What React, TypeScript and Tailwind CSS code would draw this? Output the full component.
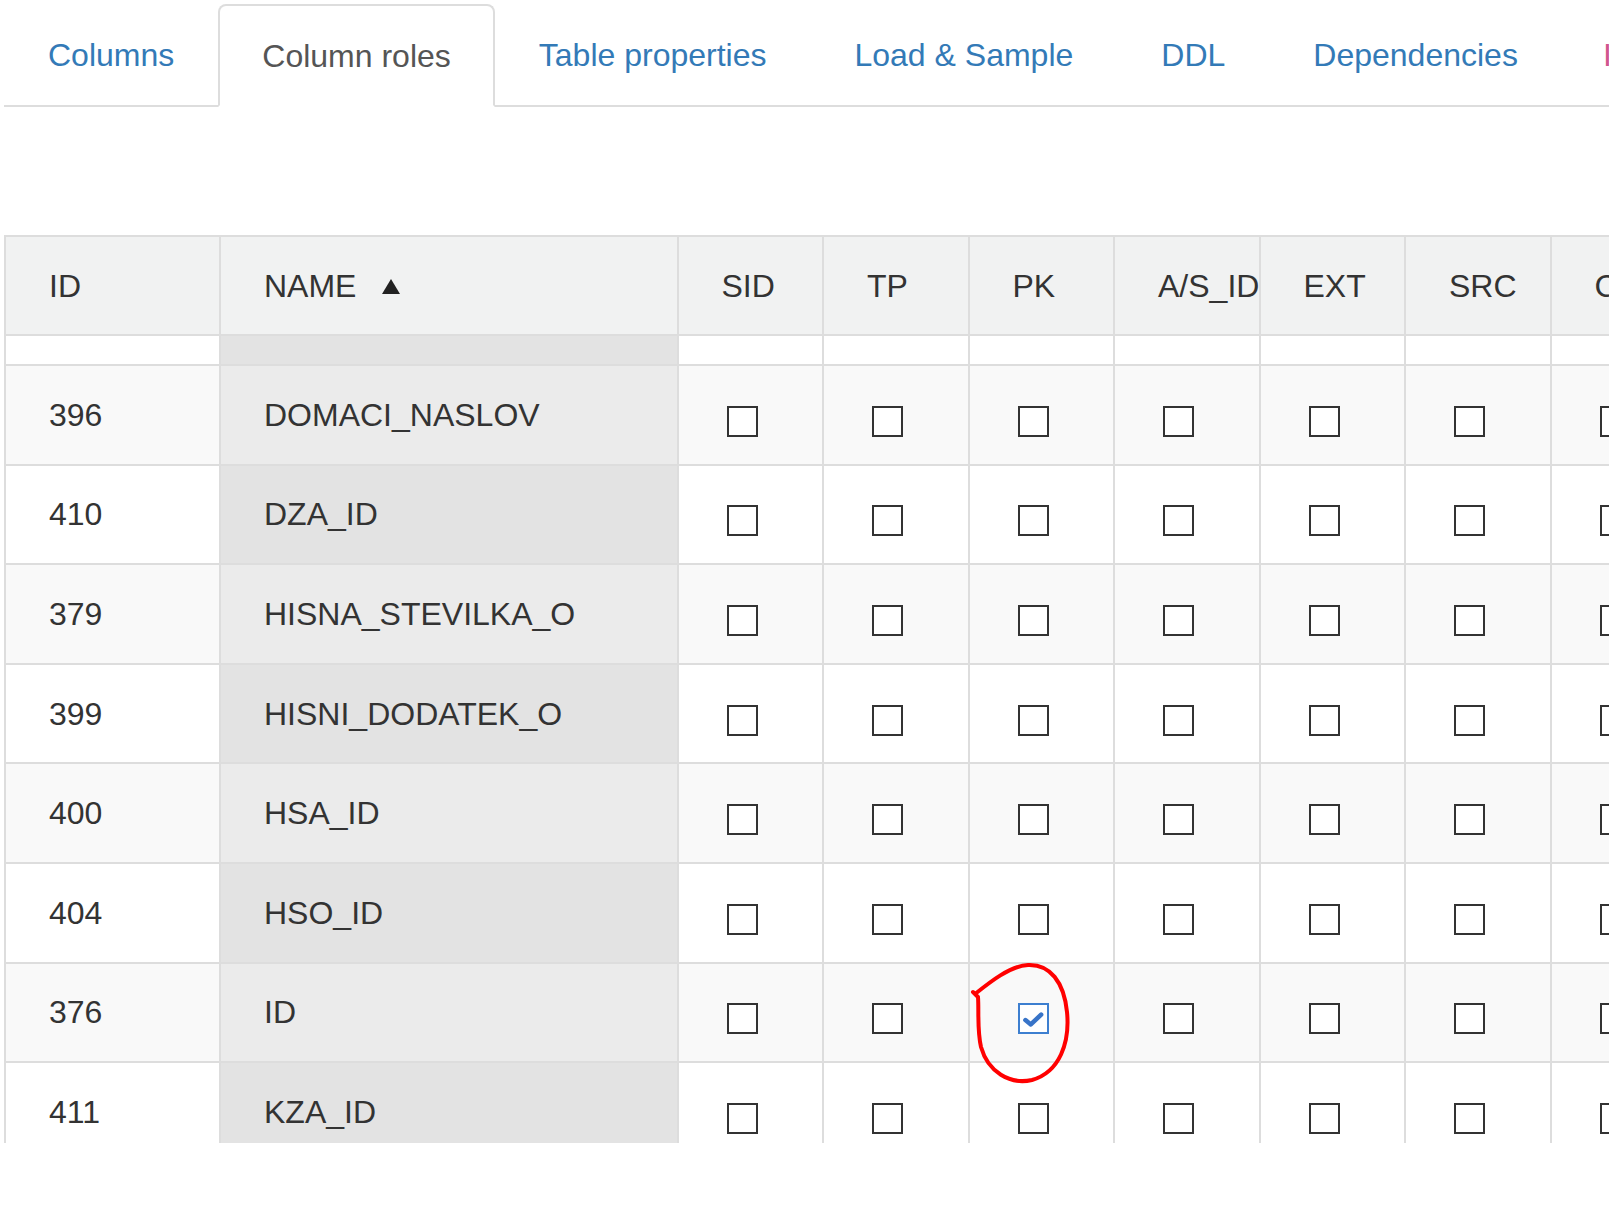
const tabs = [
  { label: 'Columns' },
  { label: 'Column roles', active: true },
  { label: 'Table properties' },
  { label: 'Load & Sample' },
  { label: 'DDL' },
  { label: 'Dependencies' },
  { label: 'Issues', danger: true },
]

const roleCols = ['SID', 'TP', 'PK', 'A/S_ID', 'EXT', 'SRC', 'CDC']

const rows = [
  { id: 396, name: 'DOMACI_NASLOV' },
  { id: 410, name: 'DZA_ID' },
  { id: 379, name: 'HISNA_STEVILKA_O' },
  { id: 399, name: 'HISNI_DODATEK_O' },
  { id: 400, name: 'HSA_ID' },
  { id: 404, name: 'HSO_ID' },
  { id: 376, name: 'ID', checked: 'PK' },
  { id: 411, name: 'KZA_ID' },
]

function Checkbox({ checked }: { checked?: boolean }) {
  if (checked) {
    return (
      <span className="mt-[13px] flex h-[31px] w-[31px] items-center justify-center border-2 border-[#3d7fd0] bg-white">
        <svg viewBox="0 0 24 24" className="h-[26px] w-[26px]" fill="none" stroke="#3874c8" strokeWidth="4.2" strokeLinecap="round" strokeLinejoin="round">
          <path d="M5 13 L10 17 L19.5 8" />
        </svg>
      </span>
    )
  }
  return <span className="mt-[13px] block h-[31px] w-[31px] border-2 border-[#333] bg-white" />
}

function Tabs() {
  return (
    <div className="flex border-b-2 border-[#dddddd] pt-[4px]">
      {tabs.map((t) => (
        <div
          key={t.label}
          className={
            t.active
              ? 'relative -mb-[2px] flex h-[103px] shrink-0 items-center rounded-t-[8px] border-2 border-[#dddddd] border-b-white bg-white px-[42px] text-[#555]'
              : t.danger
                ? 'flex h-[101px] shrink-0 items-center border-2 border-transparent pl-[39px] pr-[42px] text-[#d0568e]'
                : 'flex h-[101px] shrink-0 items-center border-2 border-transparent px-[42px] text-[#337ab7]'
          }
        >
          {t.label}
        </div>
      ))}
    </div>
  )
}

function RoleTable() {
  return (
    <div className="mt-[128px] h-[908px] overflow-hidden">
      <div className="w-max border-l-2 border-t-2 border-[#dddddd] text-[#333]">
        {/* header */}
        <div className="flex h-[99px] bg-[#f1f2f2]">
          <div className="flex w-[215px] shrink-0 items-center border-b-2 border-r-2 border-[#dddddd] pl-[43px]">ID</div>
          <div className="flex w-[457.5px] shrink-0 items-center gap-[25px] border-b-2 border-r-2 border-[#dddddd] pl-[43px]">
            NAME
            <svg viewBox="0 0 20 17" className="mt-[2px] h-[17px] w-[20px]">
              <path d="M10 1 L19 16 L1 16 Z" fill="#222" />
            </svg>
          </div>
          {roleCols.map((c) => (
            <div key={c} className="flex w-[145.5px] shrink-0 items-center whitespace-nowrap border-b-2 border-r-2 border-[#dddddd] pl-[43px]">
              {c}
            </div>
          ))}
        </div>

        {/* filter row */}
        <div className="flex h-[30px] bg-white">
          <div className="w-[215px] shrink-0 border-b-2 border-r-2 border-[#dddddd]" />
          <div className="w-[457.5px] shrink-0 border-b-2 border-r-2 border-[#dddddd] bg-[#e3e3e3]" />
          {roleCols.map((c) => (
            <div key={c} className="w-[145.5px] shrink-0 border-b-2 border-r-2 border-[#dddddd]" />
          ))}
        </div>

        {rows.map((r, i) => {
          const striped = i % 2 === 0
          return (
            <div key={r.id} className={striped ? 'flex h-[99.6px] bg-[#f9f9f9]' : 'flex h-[99.6px] bg-white'}>
              <div className="flex w-[215px] shrink-0 items-center border-b-2 border-r-2 border-[#dddddd] pl-[43px]">{r.id}</div>
              <div
                className={
                  striped
                    ? 'flex w-[457.5px] shrink-0 items-center border-b-2 border-r-2 border-[#dddddd] bg-[#ebebeb] pl-[43px]'
                    : 'flex w-[457.5px] shrink-0 items-center border-b-2 border-r-2 border-[#dddddd] bg-[#e3e3e3] pl-[43px]'
                }
              >
                {r.name}
              </div>
              {roleCols.map((c) => (
                <div key={c} className="flex w-[145.5px] shrink-0 items-center border-b-2 border-r-2 border-[#dddddd] pl-[48px]">
                  <Checkbox checked={r.checked === c} />
                </div>
              ))}
            </div>
          )
        })}
      </div>
    </div>
  )
}

export default function App() {
  return (
    <div className="relative h-[1205px] w-[1624px] overflow-hidden bg-white font-['Liberation_Sans',Arial,sans-serif] text-[32px] leading-none">
      <div className="ml-[4px] w-[1605px] overflow-hidden">
        <Tabs />
        <RoleTable />
      </div>

      {/* red hand-drawn annotation around the checked PK box */}
      <svg className="absolute left-[960px] top-[952px] h-[140px] w-[120px]" viewBox="0 0 120 140" fill="none">
        <path
          d="M15 42 C30 30, 50 14, 68 13 C90 12, 104 30, 107 60 C110 90, 100 120, 72 128 C50 133, 28 120, 21 95 C17 78, 19 58, 18 45 L13 40"
          stroke="#ff0000"
          strokeWidth="4"
          strokeLinecap="round"
          strokeLinejoin="round"
        />
      </svg>
    </div>
  )
}
